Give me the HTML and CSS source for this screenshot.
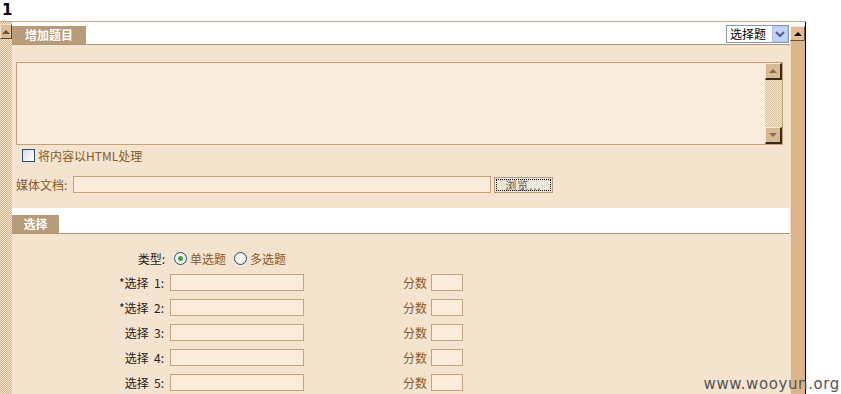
FILE: index.html
```html
<!DOCTYPE html>
<html>
<head>
<meta charset="utf-8">
<link rel="stylesheet" href="styles.css">
</head>
<body>
<div class="top">1</div>
<div class="frame">
  <div class="lscroll"><div class="lbtn"><span class="tri-up"></span></div></div>
  <div class="main">
    <div class="hdr">
      <div class="tab tab-wide">增加题目</div>
      <div class="select"><span class="sel-text">选择题</span><span class="sel-btn"><svg width="10" height="7" viewBox="0 0 10 7"><path d="M1 1 L5 5 L9 1" fill="none" stroke="#4d6185" stroke-width="2"/></svg></span></div>
    </div>
    <div class="sec1">
      <div class="textarea"><div class="ta-scroll"><div class="ta-btn"><span class="tri-up small"></span></div><div class="ta-track"></div><div class="ta-btn"><span class="tri-down small"></span></div></div></div>
      <label class="chk-row"><span class="chk"></span><span class="brown">将内容以HTML处理</span></label>
      <div class="media-row"><span class="brown">媒体文档:</span><span class="input media-input"></span><span class="browse"><span class="browse-in">浏览...</span></span></div>
    </div>
    <div class="hdr hdr2"><div class="tab tab-narrow">选择</div></div>
    <div class="sec2">
      <div class="row type-row"><span class="lbl">类型:</span><span class="radio on"></span><span class="brown">单选题</span><span class="radio"></span><span class="brown">多选题</span></div>
      <div class="row"><span class="lbl">*选择&nbsp;&nbsp;1:</span><span class="input opt"></span><span class="brown score">分数</span><span class="input sc"></span></div>
      <div class="row"><span class="lbl">*选择&nbsp;&nbsp;2:</span><span class="input opt"></span><span class="brown score">分数</span><span class="input sc"></span></div>
      <div class="row"><span class="lbl">选择&nbsp;&nbsp;3:</span><span class="input opt"></span><span class="brown score">分数</span><span class="input sc"></span></div>
      <div class="row"><span class="lbl">选择&nbsp;&nbsp;4:</span><span class="input opt"></span><span class="brown score">分数</span><span class="input sc"></span></div>
      <div class="row"><span class="lbl">选择&nbsp;&nbsp;5:</span><span class="input opt"></span><span class="brown score">分数</span><span class="input sc"></span></div>
    </div>
  </div>
  <div class="rscroll"><div class="rbtn"><span class="tri-up dark"></span></div><div class="rtrack"></div></div>
  <div class="rest"></div>
</div>
<div class="wm">www.wooyun.org</div>
</body>
</html>
```

FILE: styles.css
```css
* { box-sizing: border-box; }
html, body { margin: 0; padding: 0; background: #fff; overflow: hidden; }
body { width: 841px; height: 394px; font-family: "Noto Sans CJK SC", "DejaVu Sans", sans-serif; font-size: 12px; color: #222; position: relative; }
.top { height: 21px; padding: 1px 0 0 2px; font: bold 15px/18px "DejaVu Sans", sans-serif; color: #000; }
.frame { display: flex; height: 373px; border-top: 1px solid #c4aa88; width: 806px; }
.lscroll { width: 12px; background: repeating-conic-gradient(#d6b48c 0 25%, #f4e4cf 0 50%) 0 0 / 2px 2px; padding-top: 2px; }
.lbtn { width: 12px; height: 15px; background: #dcbc96; border-right: 1px solid #5a4630; border-bottom: 1px solid #5a4630; border-top: 1px solid #f4e2c8; border-left: 1px solid #f4e2c8; display: flex; align-items: center; justify-content: center; }
.tri-up { width: 0; height: 0; border-left: 4px solid transparent; border-right: 4px solid transparent; border-bottom: 4px solid #6a5036; }
.tri-up.small { border-bottom-color: #8a6a48; }
.tri-down { width: 0; height: 0; border-left: 4px solid transparent; border-right: 4px solid transparent; border-top: 4px solid #8a6a48; }
.tri-up.dark { border-bottom-color: #000; }
.main { width: 778px; background: #f4e3ce; }
.hdr { height: 23px; background: #fff; border-bottom: 1px solid #b09674; display: flex; align-items: flex-end; justify-content: space-between; }
.tab { height: 18px; background: #b89b7a; color: #fff; font-weight: bold; font-size: 12px; line-height: 18px; text-align: center; }
.tab-wide { width: 74px; }
.tab-narrow { width: 47px; }
.select { align-self: flex-start; margin-top: 3px; margin-right: 1px; width: 63px; height: 18px; border: 1px solid #7f9db9; background: #fff; display: flex; align-items: center; justify-content: space-between; padding-left: 3px; color: #000; }
.sel-text { line-height: 16px; }
.sel-btn { width: 16px; height: 16px; background: #c3d3f8; border: 1px solid #b0c4ec; display: flex; align-items: center; justify-content: center; }
.sec1 { padding: 17px 6px 0 4px; height: 163px; }
.textarea { height: 83px; width: 767px; background: #fbeddd; border: 1px solid #c3a27c; position: relative; display: flex; justify-content: flex-end; }
.ta-scroll { width: 17px; display: flex; flex-direction: column; }
.ta-btn { height: 17px; background: #d8b994; border-right: 2px solid #3a2a1c; border-bottom: 2px solid #3a2a1c; border-top: 1px solid #f6e8d4; border-left: 1px solid #f6e8d4; display: flex; align-items: center; justify-content: center; }
.ta-track { flex: 1; background: repeating-conic-gradient(#dcbe98 0 25%, #f6e6d2 0 50%) 0 0 / 2px 2px; }
.chk-row { display: flex; align-items: center; gap: 3px; margin: 3px 0 0 6px; height: 14px; }
.chk { width: 13px; height: 13px; border: 1px solid #1c5180; background: linear-gradient(135deg, #dcdcd6, #fff); }
.brown { color: #8a5a24; }
.media-row { display: flex; align-items: center; margin-top: 14px; height: 17px; }
.input { display: inline-block; height: 17px; background: #fcecdc; border: 1px solid #c4a27c; }
.media-input { width: 418px; margin-left: 6px; }
.browse { margin-left: 3px; width: 59px; height: 16px; background: #ece6da; border: 1px solid #b59a78; padding: 1px; }
.browse-in { display: block; height: 12px; border: 1px dotted #000; font-size: 11px; line-height: 11px; color: #555; padding-left: 8px; letter-spacing: 1px; }
.hdr2 { height: 26px; border-bottom-color: #b09674; }
.sec2 { padding-top: 12px; }
.row { display: flex; align-items: center; height: 25px; }
.lbl { width: 158px; text-align: right; color: #222; padding-right: 6px; }
.type-row .lbl { width: 153px; padding-right: 0; }
.type-row { height: 24px; }
.radio { width: 13px; height: 13px; border-radius: 50%; border: 1px solid #1c5180; background: radial-gradient(circle, #fff 0, #e4e4de 100%); margin: 0 3px 0 9px; position: relative; }
.radio + .brown + .radio { margin-left: 8px; }
.radio.on::after { content: ""; position: absolute; left: 3px; top: 3px; width: 5px; height: 5px; border-radius: 50%; background: #3aa33a; }
.opt { width: 134px; }
.score { margin-left: 99px; width: 28px; }
.sc { width: 32px; }
.rscroll { width: 16px; display: flex; flex-direction: column; padding-top: 4px; background: #fff; border-right: 1px solid #000; }
.rbtn { height: 15px; background: #e0bc90; border-top: 1px solid #f6e8d4; border-left: 1px solid #f6e8d4; border-right: 1px solid #6a5036; border-bottom: 1px solid #6a5036; display: flex; align-items: center; justify-content: center; }
.rtrack { flex: 1; background: #dcb68a; border-left: 1px solid #f2dcc0; }
.rest { flex: 1; }
.wm { position: absolute; right: 1px; bottom: 2px; font: 15px/15px "DejaVu Sans", sans-serif; color: #555; letter-spacing: 0.6px; }
```
